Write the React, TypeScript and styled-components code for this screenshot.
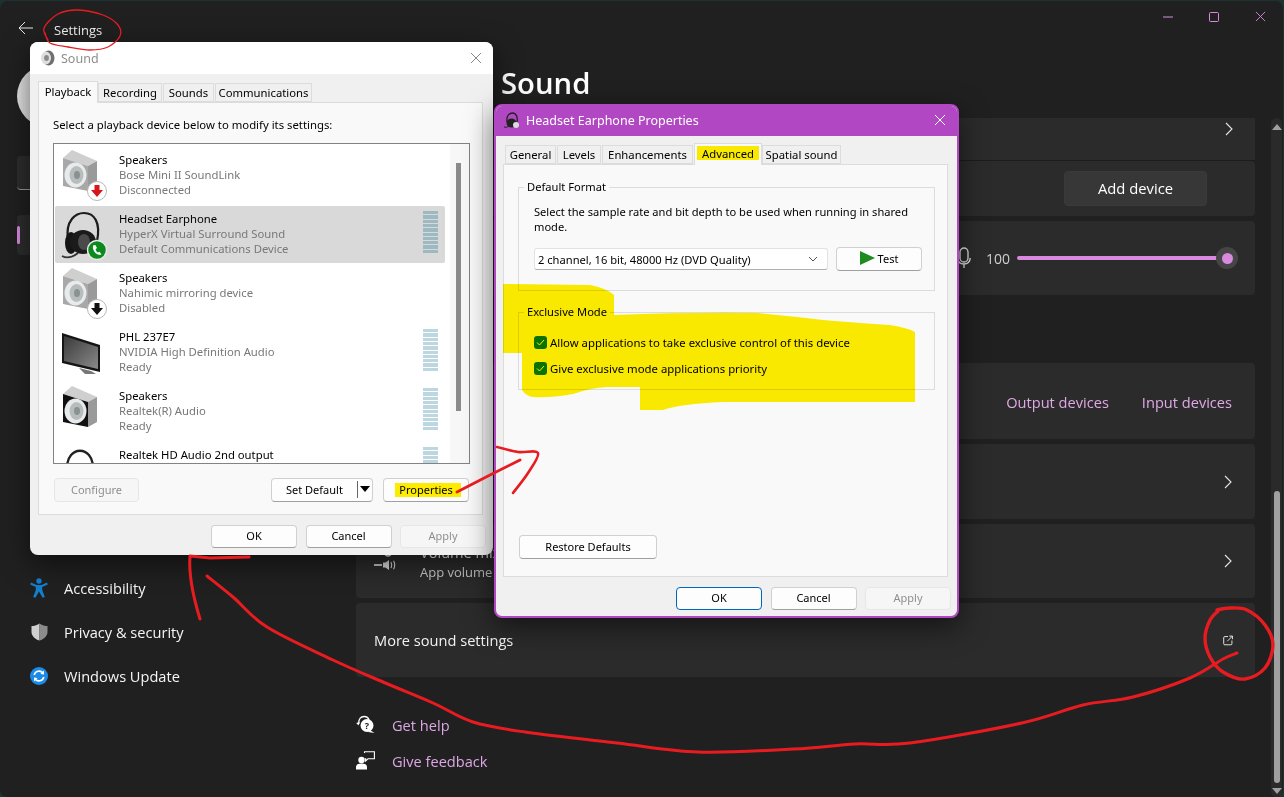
import React from "react";
import styled, { createGlobalStyle } from "styled-components";

const GlobalStyle = createGlobalStyle`
  html, body { margin: 0; padding: 0; width: 1284px; height: 797px; overflow: hidden; background: #1c3230; }
  #root { width: 1284px; height: 797px; }
  * { box-sizing: border-box; }
`;

const UI = `"Open Sans", "Noto Sans", "Liberation Sans", sans-serif`;
const PINK = "#d98ae0";

const Screen = styled.div`
  position: relative;
  width: 1284px;
  height: 797px;
  overflow: hidden;
  font-family: ${UI};
`;
const AppWindow = styled.div`
  display: flex;
  flex-direction: column;
  width: 1283px;
  height: 796px;
  margin-top: 1px;
  background: #202020;
  border-radius: 8px;
  color: #fff;
`;
const TitleBar = styled.header`
  display: flex;
  align-items: center;
  height: 57px;
  flex: none;
`;
const BackButton = styled.span`
  display: flex;
  width: 54px;
  padding-left: 18px;
  margin-top: -4px;
`;
const AppTitle = styled.span`
  font-size: 13px;
  color: #f2f2f2;
`;
const WindowControls = styled.div`
  display: flex;
  margin-left: auto;
  align-self: flex-start;
`;
const Control = styled.span`
  display: flex;
  width: 46px;
  height: 31px;
  align-items: center;
  justify-content: center;
`;
const Body = styled.div`
  display: flex;
  flex: 1;
  min-height: 0;
`;
const Sidebar = styled.aside`
  width: 356px;
  flex: none;
  padding-left: 17px;
  padding-top: 7px;
`;
const Avatar = styled.div`
  width: 62px;
  height: 62px;
  border-radius: 50%;
  background: #e4e4e4;
`;
const SearchBox = styled.div`
  width: 300px;
  height: 34px;
  margin-top: 29px;
  background: #2d2d2d;
  border-radius: 4px;
  border-bottom: 1px solid #9a9a9a;
`;
const NavList = styled.nav`
  display: flex;
  flex-direction: column;
  gap: 4px;
  margin-top: 25px;
`;
const NavRow = styled.div<{ $active?: boolean }>`
  position: relative;
  display: flex;
  align-items: center;
  gap: 15px;
  height: 40px;
  padding-left: 12px;
  margin-right: 17px;
  border-radius: 4px;
  font-size: 14.6px;
  color: #f5f5f5;
  background: ${(p) => (p.$active ? "#2d2d2d" : "transparent")};
`;
const NavIndicator = styled.span`
  position: absolute;
  left: 0;
  top: 11px;
  width: 3px;
  height: 18px;
  border-radius: 2px;
  background: ${PINK};
`;
const NavIcon = styled.span`
  display: flex;
  width: 20px;
  height: 20px;
  align-items: center;
  justify-content: center;
  flex: none;
`;
const ActiveIcon = styled.span`
  width: 16px;
  height: 16px;
  border-radius: 2px;
  background: #4fa8c8;
`;
const CoveredRows = styled.div`
  height: 305px;
`;
const Main = styled.main`
  display: flex;
  flex-direction: column;
  width: 899px;
  flex: none;
`;
const PageTitle = styled.h1`
  margin: 0;
  height: 60px;
  padding-left: 145px;
  font-size: 29.3px;
  line-height: 50px;
  font-weight: 600;
  color: #fff;
`;
const Card = styled.section<{ $h: number; $mt?: number; $flat?: boolean }>`
  display: flex;
  align-items: center;
  height: ${(p) => p.$h}px;
  margin-top: ${(p) => p.$mt ?? 5}px;
  padding: 0 22px 0 18px;
  background: #2b2b2b;
  border-radius: ${(p) => (p.$flat ? "0" : "4px")};
  font-size: 14.6px;
  color: #f2f2f2;
`;
const ScrolledRow = styled(Card)`
  align-items: flex-start;
  padding-top: 4px;
  border-bottom: 1px solid #1c1c1c;
  justify-content: flex-end;
`;
const EndRow = styled(Card)`
  justify-content: flex-end;
`;
const AddDevice = styled.button`
  width: 143px;
  height: 35px;
  margin-right: 26px;
  padding: 0 0 2px;
  border: 1px solid #3a3a3a;
  border-radius: 4px;
  background: #373737;
  color: #fff;
  font: 14.8px ${UI};
`;
const VolumeValue = styled.span`
  margin: 0 7px 0 15px;
  font-size: 14px;
  color: #cfcfcf;
`;
const SliderTrack = styled.div`
  position: relative;
  width: 210px;
  height: 4px;
  margin-right: 6px;
  border-radius: 2px;
  background: ${PINK};
`;
const SliderThumb = styled.span`
  position: absolute;
  right: -11px;
  top: -9px;
  width: 22px;
  height: 22px;
  border-radius: 50%;
  background: #454545;
  &::after {
    content: "";
    position: absolute;
    left: 5.5px;
    top: 5.5px;
    width: 11px;
    height: 11px;
    border-radius: 50%;
    background: ${PINK};
  }
`;
const HeadingGap = styled.div`
  height: 68px;
`;
const LinkRow = styled.div`
  display: flex;
  justify-content: flex-end;
  gap: 33px;
  width: 100%;
  margin: 2px 1px 0 0;
  color: #e0a8e6;
`;
const Chevron = styled.span`
  display: flex;
  margin-left: auto;
  width: 10px;
  justify-content: center;
`;
const CardIcon = styled.span`
  display: flex;
  width: 24px;
  flex: none;
  margin-right: 22px;
`;
const CardText = styled.div`
  display: flex;
  flex-direction: column;
  margin-top: 2px;
  line-height: 20px;
`;
const CardSub = styled.span`
  font-size: 13px;
  color: #c9c9c9;
`;
const HelpLinks = styled.div`
  display: flex;
  flex-direction: column;
  margin-top: 30px;
`;
const HelpLink = styled.a`
  display: flex;
  align-items: center;
  gap: 17px;
  height: 36px;
  font-size: 14.6px;
  color: #dba6e3;
  svg { flex: none; margin-top: -2px; }
`;
const ScrollTrack = styled.div`
  display: flex;
  flex-direction: column;
  align-items: center;
  width: 11px;
  height: 679px;
  margin: 60px 0 0 16px;
  padding: 6px 0 3px;
  border-radius: 6px;
  background: #2a2a2a;
`;
const ArrowUp = styled.span`
  width: 0;
  height: 0;
  border-left: 5px solid transparent;
  border-right: 5px solid transparent;
  border-bottom: 6px solid #a0a0a0;
`;
const ArrowDown = styled.span`
  width: 0;
  height: 0;
  margin-top: 5px;
  border-left: 5px solid transparent;
  border-right: 5px solid transparent;
  border-top: 6px solid #a0a0a0;
`;
const ScrollThumb = styled.span`
  width: 6px;
  height: 292px;
  margin-top: auto;
  border-radius: 3px;
  background: #a0a0a0;
`;

/* ---------- classic dialogs ---------- */
const Dialog = styled.div<{ $x: number; $y: number; $w: number; $h: number; $accent?: boolean }>`
  position: absolute;
  left: ${(p) => p.$x}px;
  top: ${(p) => p.$y}px;
  width: ${(p) => p.$w}px;
  height: ${(p) => p.$h}px;
  display: flex;
  flex-direction: column;
  overflow: hidden;
  background: #f0f0f0;
  border-radius: 8px;
  border: ${(p) => (p.$accent ? "2px solid #b147c2" : "0")};
  box-shadow: 0 8px 28px rgba(0, 0, 0, 0.55);
  font-size: 12px;
  color: #000;
  font-family: "Noto Sans", "Open Sans", sans-serif;
`;
const DialogBar = styled.div<{ $accent?: boolean }>`
  display: flex;
  align-items: center;
  flex: none;
  height: ${(p) => (p.$accent ? 30 : 32)}px;
  padding-left: ${(p) => (p.$accent ? 8 : 10)}px;
  padding-right: 11px;
  padding-bottom: ${(p) => (p.$accent ? 2 : 0)}px;
  background: ${(p) => (p.$accent ? "#b147c2" : "#ffffff")};
  color: ${(p) => (p.$accent ? "#ffffff" : "#8e8e8e")};
`;
const DialogName = styled.span`
  margin-left: 6px;
  font-size: 12.5px;
`;
const DialogClose = styled.span`
  display: flex;
  margin-left: auto;
`;
const TabStrip = styled.div<{ $ml: number; $mt: number }>`
  display: flex;
  align-items: flex-end;
  flex: none;
  margin: ${(p) => p.$mt}px 0 0 ${(p) => p.$ml}px;
`;
const Tab = styled.span<{ $w: number; $active?: boolean }>`
  display: flex;
  align-items: center;
  justify-content: center;
  position: ${(p) => (p.$active ? "relative" : "static")};
  width: ${(p) => p.$w}px;
  height: ${(p) => (p.$active ? 22 : 19)}px;
  margin-right: ${(p) => (p.$active ? 0 : 1)}px;
  margin-bottom: ${(p) => (p.$active ? -1 : 0)}px;
  padding-bottom: ${(p) => (p.$active ? 2 : 0)}px;
  font-size: 11.3px;
  white-space: nowrap;
  background: ${(p) => (p.$active ? "#f9f9f9" : "#f0f0f0")};
  border: 1px solid #dcdcdc;
  border-bottom: ${(p) => (p.$active ? "0" : "1px solid #dcdcdc")};
`;
const TabPanel = styled.div<{ $ml: number }>`
  display: flex;
  flex-direction: column;
  flex: none;
  width: 445px;
  height: 413px;
  margin-left: ${(p) => p.$ml}px;
  padding: 0 0 0 14px;
  background: #f9f9f9;
  border: 1px solid #dcdcdc;
`;
const Prompt = styled.p`
  margin: 14px 0 10px;
  height: 16px;
  line-height: 16px;
  font-size: 11.33px;
`;
const DeviceList = styled.div`
  position: relative;
  display: flex;
  flex-direction: column;
  gap: 2px;
  width: 417px;
  height: 321px;
  flex: none;
  padding: 3px 0 0 1px;
  overflow: hidden;
  background: #fff;
  border: 1px solid #838383;
`;
const ListScrollbar = styled.span`
  position: absolute;
  right: 0;
  top: 0;
  bottom: 0;
  width: 19px;
  background: #f7f7f7;
  &::after {
    content: "";
    position: absolute;
    left: 6px;
    top: 19px;
    width: 5px;
    height: 248px;
    background: #8a8a8a;
  }
`;
const DeviceRow = styled.div<{ $selected?: boolean }>`
  display: flex;
  flex: none;
  width: 390px;
  height: 57px;
  padding: 2px 7px 0 6px;
  border-radius: 2px;
  background: ${(p) => (p.$selected ? "#d9d9d9" : "transparent")};
`;
const DeviceIcon = styled.svg`
  flex: none;
  width: 50px;
  height: 56px;
`;
const DeviceText = styled.div`
  display: flex;
  flex-direction: column;
  margin: 3px 0 0 8px;
  font-size: 11.3px;
  line-height: 15px;
  white-space: nowrap;
`;
const DeviceDetail = styled.span`
  color: #787878;
`;
const LevelMeter = styled.span<{ $tint: string }>`
  flex: none;
  width: 15px;
  height: 43px;
  margin: 3px 0 0 auto;
  background: repeating-linear-gradient(
    to bottom,
    ${(p) => p.$tint} 0,
    ${(p) => p.$tint} 3.3px,
    transparent 3.3px,
    transparent 4.3px
  );
`;
const ButtonRow = styled.div`
  display: flex;
  align-items: center;
  width: 416px;
  height: 24px;
  margin-top: 14px;
`;
const DlgButton = styled.button<{ $w: number; $h?: number; $disabled?: boolean; $primary?: boolean }>`
  flex: none;
  width: ${(p) => p.$w}px;
  height: ${(p) => p.$h ?? 23}px;
  padding: 0 0 2px;
  border-radius: 4px;
  font-family: "Noto Sans", "Open Sans", sans-serif;
  font-size: 11px;
  color: ${(p) => (p.$disabled ? "#8f8f8f" : "#000")};
  background: ${(p) => (p.$disabled ? "#f6f6f6" : "#fdfdfd")};
  border: ${(p) => (p.$primary ? "1.5px" : "1px")} solid ${(p) => (p.$primary ? "#0067c0" : p.$disabled ? "#e6e6e6" : "#d0d0d0")};
  border-bottom-color: ${(p) => (p.$primary ? "#0067c0" : p.$disabled ? "#e6e6e6" : "#a0a0a0")};
`;
const ConfigureButton = styled(DlgButton)`
  margin-left: 1px;
  margin-right: auto;
`;
const SplitButton = styled(DlgButton)`
  display: flex;
  align-items: center;
  padding-left: 14px;
  margin-right: 10px;
`;
const SplitCaret = styled.span`
  display: flex;
  align-items: center;
  justify-content: center;
  width: 15px;
  height: 17px;
  margin-left: auto;
  border-left: 1.5px solid #666;
  &::after {
    content: "";
    border-left: 5px solid transparent;
    border-right: 5px solid transparent;
    border-top: 6px solid #000;
  }
`;
const DialogFooter = styled.div<{ $pr: number }>`
  display: flex;
  justify-content: flex-end;
  gap: 8.5px;
  padding: 10px ${(p) => p.$pr}px 0 0;
`;
const GroupBox = styled.fieldset<{ $h: number; $mt: number }>`
  width: 417px;
  height: ${(p) => p.$h}px;
  margin: ${(p) => p.$mt}px 0 0 0;
  padding: 0 0 0 15px;
  border: 1px solid #dcdcdc;
  min-inline-size: 0;
  flex: none;
`;
const GroupLegend = styled.legend`
  margin-left: -10px;
  padding: 0 3px;
  height: 16px;
  line-height: 16px;
  font-size: 11.15px;
`;
const GroupText = styled.p`
  margin: 9px 0 0;
  width: 395px;
  line-height: 15px;
  font-size: 11.12px;
`;
const FormatRow = styled.div`
  display: flex;
  align-items: center;
  gap: 8px;
  margin-top: 13px;
`;
const FormatSelect = styled.div`
  display: flex;
  align-items: center;
  width: 294px;
  height: 22px;
  padding: 0 9px 0 3px;
  background: #fff;
  border: 1px solid #e2e2e2;
  border-bottom-color: #b0b0b0;
  border-radius: 3px;
  font-size: 11.15px;
  svg { margin-left: auto; }
`;
const TestButton = styled(DlgButton)`
  display: flex;
  align-items: center;
  justify-content: center;
  gap: 3px;
`;
const CheckRows = styled.div`
  display: flex;
  flex-direction: column;
  gap: 12px;
  padding-top: 15px;
`;
const CheckRow = styled.label`
  display: flex;
  align-items: center;
  gap: 3px;
  height: 14px;
  font-size: 11.35px;
  white-space: nowrap;
`;
const CheckBox = styled.span`
  display: flex;
  align-items: center;
  justify-content: center;
  width: 13px;
  height: 13px;
  border-radius: 3px;
  background: #0a7a2a;
`;
const RestoreButton = styled(DlgButton)`
  margin: 145px 0 0 1px;
`;
const Annotations = styled.svg`
  position: absolute;
  left: 0;
  top: 0;
  pointer-events: none;
`;
const Highlighter = styled(Annotations)`
  mix-blend-mode: multiply;
`;

/* ---------- drawings ---------- */
type Pt = [number, number];
function smooth(points: Pt[]): string {
  let d = `M${points[0][0]} ${points[0][1]}`;
  for (let i = 0; i < points.length - 1; i++) {
    const p0 = points[Math.max(i - 1, 0)];
    const p1 = points[i];
    const p2 = points[i + 1];
    const p3 = points[Math.min(i + 2, points.length - 1)];
    d += ` C${p1[0] + (p2[0] - p0[0]) / 6} ${p1[1] + (p2[1] - p0[1]) / 6} ${p2[0] - (p3[0] - p1[0]) / 6} ${p2[1] - (p3[1] - p1[1]) / 6} ${p2[0]} ${p2[1]}`;
  }
  return d;
}

const SpeakerBody = ({ dark }: { dark?: boolean }) => (
  <>
    <polygon points="2,9 11,1 36,12 27,17" fill="#cfcfcf" />
    <polygon points="27,17 36,12 36,37 27,42" fill="#9a9a9a" />
    <polygon points="2,9 27,17 27,42 2,37" fill={dark ? "#111" : "#a8a8a8"} />
    <ellipse cx="14.5" cy="26" rx="11" ry="12.5" fill="#e8ebeb" />
    <ellipse cx="15.5" cy="26" rx="7" ry="9" fill="#b7bcbd" />
    <ellipse cx="16" cy="26" rx="3" ry="4" fill="#8b9091" />
  </>
);
const Badge = ({ fill, ring = "#fff" }: { fill: string; ring?: string }) => (
  <circle cx="36" cy="42" r="9.5" fill={fill} stroke={ring} strokeWidth="1.5" />
);
const DownArrow = ({ color }: { color: string }) => (
  <polygon points="33.5,36 38.5,36 38.5,41 42,41 36,48 30,41 33.5,41" fill={color} />
);
const SpeakerIcon = ({ arrow, dark }: { arrow?: string; dark?: boolean }) => (
  <DeviceIcon viewBox="0 0 50 56">
    <SpeakerBody dark={dark} />
    {arrow && (
      <>
        <circle cx="36" cy="42" r="9.5" fill="#fff" stroke="#b8b8b8" strokeWidth="1" />
        <DownArrow color={arrow} />
      </>
    )}
  </DeviceIcon>
);
const HeadsetIcon = () => (
  <DeviceIcon viewBox="0 0 50 56">
    <path d="M7 32 C4 12 15 5 23 5 C33 5 40 14 36 33" fill="none" stroke="#1d1d1d" strokeWidth="2.2" />
    <ellipse cx="10" cy="35" rx="6" ry="11" fill="#151515" />
    <ellipse cx="22" cy="34" rx="13" ry="12" fill="#1b1b1b" />
    <ellipse cx="23" cy="34" rx="6" ry="8" fill="#4a4a4a" />
    <path d="M1 48 Q8 52 17 45" fill="none" stroke="#333" strokeWidth="1.8" />
    <Badge fill="#0a8a1f" ring="#e8e8e8" />
    <path d="M32 37.5 C31 43 36 48 40.5 46.6 L38.6 43.8 L36.8 44.6 C35.6 43.6 34.9 42.6 34.6 41.2 L36 40 L34.4 37 Z" fill="#fff" />
  </DeviceIcon>
);
const MonitorIcon = () => (
  <DeviceIcon viewBox="0 0 50 56">
    <defs>
      <linearGradient id="mon" x1="0" y1="0" x2="1" y2="1">
        <stop offset="0" stopColor="#3a3a3a" />
        <stop offset="1" stopColor="#8a8a8a" />
      </linearGradient>
    </defs>
    <polygon points="1,7 39,19 39,46 1,37" fill="#151515" />
    <polygon points="3,10 37,21 37,43 3,35" fill="url(#mon)" />
    <polygon points="18,42 30,45 35,48 24,48" fill="#777" />
  </DeviceIcon>
);
const ArcIcon = () => (
  <DeviceIcon viewBox="0 0 50 56">
    <path d="M6 24 C6 1 32 1 32 24" fill="none" stroke="#222" strokeWidth="2.4" />
  </DeviceIcon>
);
const Close = ({ color, size = 12 }: { color: string; size?: number }) => (
  <svg width={size} height={size} viewBox="0 0 12 12">
    <path d="M1 1 L11 11 M11 1 L1 11" stroke={color} strokeWidth="1" />
  </svg>
);
const ChevronGlyph = () => (
  <svg width="8" height="14" viewBox="0 0 8 14">
    <path d="M1 1 L7 7 L1 13" fill="none" stroke="#e6e6e6" strokeWidth="1.1" />
  </svg>
);
const SoundGlyph = () => (
  <svg width="15" height="16" viewBox="0 0 15 16">
    <ellipse cx="8.5" cy="8" rx="6" ry="7.5" fill="#6f6f6f" />
    <ellipse cx="6" cy="8" rx="5" ry="6.5" fill="#dedede" />
    <ellipse cx="6.5" cy="8" rx="2.4" ry="3" fill="#8a8a8a" />
  </svg>
);
const SmallHeadset = () => (
  <svg width="16" height="17" viewBox="0 0 16 17">
    <path d="M3 10 C2 3 6 1 8.5 1 C12 1 14 5 13 10" fill="none" stroke="#222" strokeWidth="1.3" />
    <ellipse cx="7.5" cy="11" rx="5" ry="4.5" fill="#222" />
    <circle cx="12" cy="13" r="3" fill="#dcdcdc" />
    <path d="M0 15 Q3 16 5 14" fill="none" stroke="#222" strokeWidth="1" />
  </svg>
);
const AccessibilityIcon = () => (
  <svg width="18" height="20" viewBox="0 0 18 20">
    <circle cx="9" cy="3" r="2.7" fill="#1280cf" />
    <path d="M1 4.5 L6.5 7 H11.5 L17 4.5 L17.8 6.5 L12.2 9 V12 L14.8 19 L12.6 19.8 L9 13.5 L5.4 19.8 L3.2 19 L5.8 12 V9 L0.2 6.5 Z" fill="#1280cf" />
  </svg>
);
const ShieldIcon = () => (
  <svg width="17" height="18" viewBox="0 0 17 18">
    <path d="M8.5 0.5 C5.5 2.5 3 3 0.5 3 V9 C0.5 13 4 16.2 8.5 17.5 Z" fill="#d0d0d0" />
    <path d="M8.5 0.5 C11.5 2.5 14 3 16.5 3 V9 C16.5 13 13 16.2 8.5 17.5 Z" fill="#8c8c8c" />
  </svg>
);
const UpdateIcon = () => (
  <svg width="18" height="18" viewBox="0 0 18 18">
    <circle cx="9" cy="9" r="9" fill="#1a8be6" />
    <path d="M4.2 8 A5 5 0 0 1 13 6" fill="none" stroke="#fff" strokeWidth="1.6" />
    <path d="M13.8 10 A5 5 0 0 1 5 12" fill="none" stroke="#fff" strokeWidth="1.6" />
    <polygon points="14,3.4 14,7.4 10.4,7" fill="#fff" />
    <polygon points="4,14.6 4,10.6 7.6,11" fill="#fff" />
  </svg>
);
const MicIcon = () => (
  <svg width="14" height="22" viewBox="0 0 14 22">
    <rect x="3" y="1" width="8" height="14" rx="4" fill="none" stroke="#e4e4e4" strokeWidth="1.3" />
    <path d="M0.8 11 C0.8 15 3.5 17 7 17 C10.5 17 13.2 15 13.2 11 M7 17 V21" fill="none" stroke="#e4e4e4" strokeWidth="1.3" />
  </svg>
);
const MixerIcon = () => (
  <svg width="24" height="24" viewBox="0 0 24 24">
    <circle cx="14" cy="4" r="3" fill="none" stroke="#e8e8e8" strokeWidth="1.4" />
    <rect x="0" y="15.2" width="8" height="1.6" fill="#e8e8e8" />
    <path d="M9 13.6 H11.5 L15 11 V21 L11.5 18.4 H9 Z" fill="#d8d8d8" />
    <path d="M17 13 Q18.5 16 17 19 M19.6 11.8 Q21.8 16 19.6 20.2" fill="none" stroke="#d8d8d8" strokeWidth="1.1" />
  </svg>
);
const ExternalIcon = () => (
  <svg width="15" height="15" viewBox="0 0 14 14">
    <path d="M7 1.5 H2.5 A1.5 1.5 0 0 0 1 3 V11.5 A1.5 1.5 0 0 0 2.5 13 H11 A1.5 1.5 0 0 0 12.5 11.5 V7" fill="none" stroke="#fff" strokeWidth="1.2" />
    <path d="M6 8 L13 1 M8.8 0.8 H13.2 V5.2" fill="none" stroke="#fff" strokeWidth="1.2" />
  </svg>
);
const HelpIcon = () => (
  <svg width="19" height="19" viewBox="0 0 19 19">
    <path d="M3 9 C2 4 5 1.5 8 1.5 C10.5 1.5 12.5 3 13 5" fill="none" stroke="#fff" strokeWidth="1.3" />
    <path d="M3.4 7 L2.6 10.4 L0.2 8" fill="#fff" />
    <circle cx="11" cy="10.5" r="6.5" fill="#fff" />
    <path d="M14 15 L18.5 18 L12 17 Z" fill="#fff" />
    <text x="11" y="13.8" fontSize="9" fontWeight="700" textAnchor="middle" fill="#202020" fontFamily="'Open Sans', sans-serif">?</text>
  </svg>
);
const FeedbackIcon = () => (
  <svg width="19" height="19" viewBox="0 0 19 19">
    <path d="M8.5 2 V0.8 H18.4 V7.8 H12 L9.6 10 V7.8 H8.6" fill="none" stroke="#fff" strokeWidth="1.1" />
    <circle cx="5.5" cy="9" r="3.2" fill="#fff" />
    <path d="M0 18.5 V16 C0 13.5 2 12.5 5.5 12.5 C9 12.5 11 13.5 11 16 V18.5 Z" fill="#fff" />
  </svg>
);

const settingsRing = smooth([[48, 40], [44, 28], [58, 14], [78, 10], [103, 15], [118, 25], [120, 36], [108, 47], [90, 50], [68, 47], [50, 43], [45, 33]]);
const longCurve = smooth([[207, 576], [233, 597], [267, 627], [333, 660], [383, 682], [433, 703], [473, 722], [525, 732], [617, 743], [698, 752], [794, 749], [855, 744], [910, 743], [1022, 723], [1083, 705], [1133, 697], [1190, 678], [1223, 659], [1237, 653]]);
const iconRing = smooth([[1217, 610], [1230, 608], [1247, 610], [1265, 625], [1273, 645], [1265, 668], [1245, 679], [1223, 672], [1210, 657], [1205, 638], [1210, 620], [1218, 611]]);

const DEVICES = [
  { name: "Speakers", detail: "Bose Mini II SoundLink", status: "Disconnected", icon: <SpeakerIcon arrow="#d8161b" /> },
  { name: "Headset Earphone", detail: "HyperX Virtual Surround Sound", status: "Default Communications Device", icon: <HeadsetIcon />, selected: true, meter: true },
  { name: "Speakers", detail: "Nahimic mirroring device", status: "Disabled", icon: <SpeakerIcon arrow="#111" /> },
  { name: "PHL 237E7", detail: "NVIDIA High Definition Audio", status: "Ready", icon: <MonitorIcon />, meter: true },
  { name: "Speakers", detail: "Realtek(R) Audio", status: "Ready", icon: <SpeakerIcon dark />, meter: true },
  { name: "Realtek HD Audio 2nd output", detail: "", status: "", icon: <ArcIcon />, meter: true },
];

const Tick = () => (
  <svg width="9" height="7" viewBox="0 0 9 7"><path d="M1 3.5 L3.5 6 L8 1" fill="none" stroke="#fff" /></svg>
);

export default function App() {
  return (
    <Screen>
      <GlobalStyle />
      <AppWindow>
        <TitleBar>
          <BackButton>
            <svg width="15" height="14" viewBox="0 0 15 14">
              <path d="M7 1 L1 7 L7 13 M1 7 H15" fill="none" stroke="#e8e8e8" strokeWidth="1" />
            </svg>
          </BackButton>
          <AppTitle>Settings</AppTitle>
          <WindowControls>
            <Control>
              <svg width="10" height="2" viewBox="0 0 10 2"><path d="M0 1 H10" stroke={PINK} strokeWidth="1" /></svg>
            </Control>
            <Control>
              <svg width="10" height="10" viewBox="0 0 10 10"><rect x="0.5" y="0.5" width="9" height="9" rx="1" fill="none" stroke={PINK} /></svg>
            </Control>
            <Control>
              <Close color={PINK} size={11} />
            </Control>
          </WindowControls>
        </TitleBar>
        <Body>
          <Sidebar>
            <Avatar />
            <SearchBox />
            <NavList>
              <NavRow $active>
                <NavIndicator />
                <NavIcon><ActiveIcon /></NavIcon>
              </NavRow>
              <CoveredRows />
              <NavRow><NavIcon><AccessibilityIcon /></NavIcon>Accessibility</NavRow>
              <NavRow><NavIcon><ShieldIcon /></NavIcon>Privacy &amp; security</NavRow>
              <NavRow><NavIcon><UpdateIcon /></NavIcon>Windows Update</NavRow>
            </NavList>
          </Sidebar>
          <Main>
            <PageTitle>Sound</PageTitle>
            <ScrolledRow as="div" $h={43} $mt={0} $flat>
              <ChevronGlyph />
            </ScrolledRow>
            <EndRow $h={55} $mt={0}>
              <AddDevice>Add device</AddDevice>
            </EndRow>
            <EndRow $h={74}>
              <MicIcon />
              <VolumeValue>100</VolumeValue>
              <SliderTrack><SliderThumb /></SliderTrack>
            </EndRow>
            <HeadingGap />
            <Card $h={76} $mt={0}>
              <LinkRow>
                <span>Output devices</span>
                <span>Input devices</span>
              </LinkRow>
            </Card>
            <Card $h={75}>
              <Chevron><ChevronGlyph /></Chevron>
            </Card>
            <Card $h={74}>
              <CardIcon><MixerIcon /></CardIcon>
              <CardText>
                <span>Volume mixer</span>
                <CardSub>App volume</CardSub>
              </CardText>
              <Chevron><ChevronGlyph /></Chevron>
            </Card>
            <Card $h={74}>
              More sound settings
              <Chevron><ExternalIcon /></Chevron>
            </Card>
            <HelpLinks>
              <HelpLink><HelpIcon />Get help</HelpLink>
              <HelpLink><FeedbackIcon />Give feedback</HelpLink>
            </HelpLinks>
          </Main>
          <ScrollTrack>
            <ArrowUp />
            <ScrollThumb />
            <ArrowDown />
          </ScrollTrack>
        </Body>
      </AppWindow>

      <Dialog $x={30} $y={42} $w={463} $h={513}>
        <DialogBar>
          <SoundGlyph />
          <DialogName>Sound</DialogName>
          <DialogClose><Close color="#8a8a8a" /></DialogClose>
        </DialogBar>
        <TabStrip $ml={8} $mt={7}>
          <Tab $w={60} $active>Playback</Tab>
          <Tab $w={64}>Recording</Tab>
          <Tab $w={51}>Sounds</Tab>
          <Tab $w={97}>Communications</Tab>
        </TabStrip>
        <TabPanel $ml={8}>
          <Prompt>Select a playback device below to modify its settings:</Prompt>
          <DeviceList>
            {DEVICES.map((d, i) => (
              <DeviceRow key={i} $selected={d.selected}>
                {d.icon}
                <DeviceText>
                  <span>{d.name}</span>
                  {d.detail && <DeviceDetail>{d.detail}</DeviceDetail>}
                  {d.status && <DeviceDetail>{d.status}</DeviceDetail>}
                </DeviceText>
                {d.meter && <LevelMeter $tint={d.selected ? "#9dbac3" : "#bcd7e0"} />}
              </DeviceRow>
            ))}
            <ListScrollbar />
          </DeviceList>
          <ButtonRow>
            <ConfigureButton $w={85} $h={24} $disabled>Configure</ConfigureButton>
            <SplitButton as="div" $w={102} $h={24}>
              Set Default
              <SplitCaret />
            </SplitButton>
            <DlgButton $w={86} $h={24}>Properties</DlgButton>
          </ButtonRow>
        </TabPanel>
        <DialogFooter $pr={7}>
          <DlgButton $w={86}>OK</DlgButton>
          <DlgButton $w={86}>Cancel</DlgButton>
          <DlgButton $w={86} $disabled>Apply</DlgButton>
        </DialogFooter>
      </Dialog>

      <Dialog $x={494} $y={104} $w={465} $h={514} $accent>
        <DialogBar $accent>
          <SmallHeadset />
          <DialogName>Headset Earphone Properties</DialogName>
          <DialogClose><Close color="#fff" /></DialogClose>
        </DialogBar>
        <TabStrip $ml={9} $mt={7}>
          <Tab $w={51}>General</Tab>
          <Tab $w={44}>Levels</Tab>
          <Tab $w={91}>Enhancements</Tab>
          <Tab $w={68} $active>Advanced</Tab>
          <Tab $w={79}>Spatial sound</Tab>
        </TabStrip>
        <TabPanel $ml={7}>
          <GroupBox $h={112} $mt={14}>
            <GroupLegend>Default Format</GroupLegend>
            <GroupText>Select the sample rate and bit depth to be used when running in shared mode.</GroupText>
            <FormatRow>
              <FormatSelect>
                2 channel, 16 bit, 48000 Hz (DVD Quality)
                <svg width="10" height="6" viewBox="0 0 10 6"><path d="M1 1 L5 5 L9 1" fill="none" stroke="#555" /></svg>
              </FormatSelect>
              <TestButton $w={86} $h={24}>
                <svg width="15" height="14" viewBox="0 0 15 14"><polygon points="0,0 15,7 0,14" fill="#1f8a1f" /></svg>
                Test
              </TestButton>
            </FormatRow>
          </GroupBox>
          <GroupBox $h={86} $mt={13}>
            <GroupLegend>Exclusive Mode</GroupLegend>
            <CheckRows>
              <CheckRow>
                <CheckBox><Tick /></CheckBox>
                Allow applications to take exclusive control of this device
              </CheckRow>
              <CheckRow>
                <CheckBox><Tick /></CheckBox>
                Give exclusive mode applications priority
              </CheckRow>
            </CheckRows>
          </GroupBox>
          <RestoreButton $w={138} $h={24}>Restore Defaults</RestoreButton>
        </TabPanel>
        <DialogFooter $pr={6}>
          <DlgButton $w={86} $primary>OK</DlgButton>
          <DlgButton $w={86}>Cancel</DlgButton>
          <DlgButton $w={86} $disabled>Apply</DlgButton>
        </DialogFooter>
      </Dialog>

      <Highlighter width="1284" height="797" viewBox="0 0 1284 797">
        <path d="M503 284 L590 285 Q606 288 614 295 L614 315 Q690 312 757 313 Q790 316 823 320 Q870 324 890 325 Q908 328 915 332 L915 402 L723 402 Q680 404 663 410 L640 410 L640 387 L607 387 Q590 388 573 394 Q550 398 533 397 Q526 396 522 390 L522 353 L503 353 Z" fill="#ffee00" />
        <rect x="697" y="146" width="62" height="14" fill="#ffee00" />
        <rect x="395" y="483" width="66" height="14" fill="#ffee00" />
      </Highlighter>
      <Annotations width="1284" height="797" viewBox="0 0 1284 797" fill="none" stroke="#e81c20" strokeLinecap="round" strokeLinejoin="round">
        <path d={settingsRing} strokeWidth="1.3" />
        <path d="M457 492 L490 475 L520 460" strokeWidth="2.8" />
        <path d={smooth([[497, 447], [518, 452], [538, 453], [528, 473], [513, 493]])} strokeWidth="2.6" />
        <path d="M249 557 L210 558 L190 556 Q188 580 200 619" strokeWidth="3" />
        <path d={longCurve} strokeWidth="3" />
        <path d={iconRing} strokeWidth="3.4" />
      </Annotations>
    </Screen>
  );
}
